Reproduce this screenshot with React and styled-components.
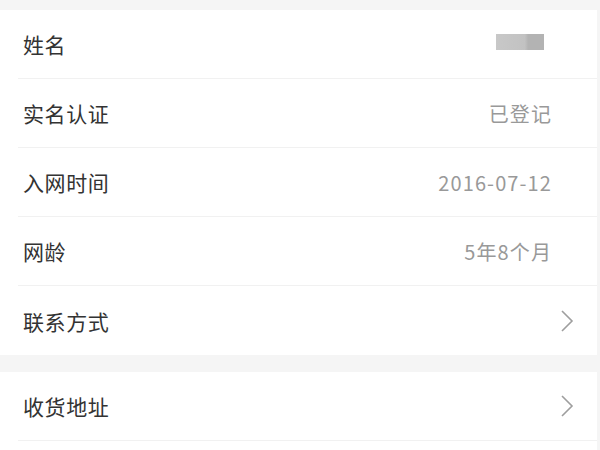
import React from 'react';
import styled, { createGlobalStyle } from 'styled-components';

const GlobalStyle = createGlobalStyle`
  html, body {
    margin: 0;
    padding: 0;
    background: #f5f5f5;
    font-family: "Noto Sans CJK SC", "Noto Sans", sans-serif;
  }
`;

const Page = styled.div`
  width: 600px;
  height: 450px;
  overflow: hidden;
  padding-top: 10px;
  box-sizing: border-box;
  background: #f5f5f5;
`;

const Group = styled.div`
  background: #fff;
  margin-right: 3px;
  margin-bottom: ${props => props.gap || 0}px;
`;

const Row = styled.div`
  height: 69px;
  box-sizing: border-box;
  margin-left: 18px;
  padding: 0 24px 0 5px;
  display: flex;
  align-items: center;
  justify-content: space-between;
  border-bottom: ${props => (props.last ? 'none' : '1.5px solid #f1f1f1')};
`;

const Label = styled.span`
  font-size: 21px;
  color: #333;
  letter-spacing: 0.6px;
`;

const Value = styled.span`
  font-size: 20px;
  color: #999;
  letter-spacing: 1.1px;
  margin-right: 21px;
`;

const Blurred = styled.div`
  width: 48px;
  height: 16px;
  margin-right: 29px;
  margin-top: -4px;
  background: linear-gradient(90deg, #c8c8c8 0%, #c2c2c2 60%, #b3b3b3 67%, #b3b3b3 100%);
  filter: blur(0.6px);
`;

const Chevron = () => (
  <svg width="14" height="22" viewBox="0 0 14 22" style={{ marginRight: '-1px' }}>
    <path d="M2 1 L12 11 L2 21" fill="none" stroke="#9e9e9e" strokeWidth="1.6" />
  </svg>
);

const Tail = styled.div`
  height: 10px;
  background: #fff;
`;

export default function App() {
  return (
    <Page>
      <GlobalStyle />
      <Group gap={17}>
        <Row>
          <Label>姓名</Label>
          <Blurred />
        </Row>
        <Row>
          <Label>实名认证</Label>
          <Value>已登记</Value>
        </Row>
        <Row>
          <Label>入网时间</Label>
          <Value>2016-07-12</Value>
        </Row>
        <Row>
          <Label>网龄</Label>
          <Value>5年8个月</Value>
        </Row>
        <Row last>
          <Label>联系方式</Label>
          <Chevron />
        </Row>
      </Group>
      <Group>
        <Row>
          <Label>收货地址</Label>
          <Chevron />
        </Row>
        <Tail />
      </Group>
    </Page>
  );
}
